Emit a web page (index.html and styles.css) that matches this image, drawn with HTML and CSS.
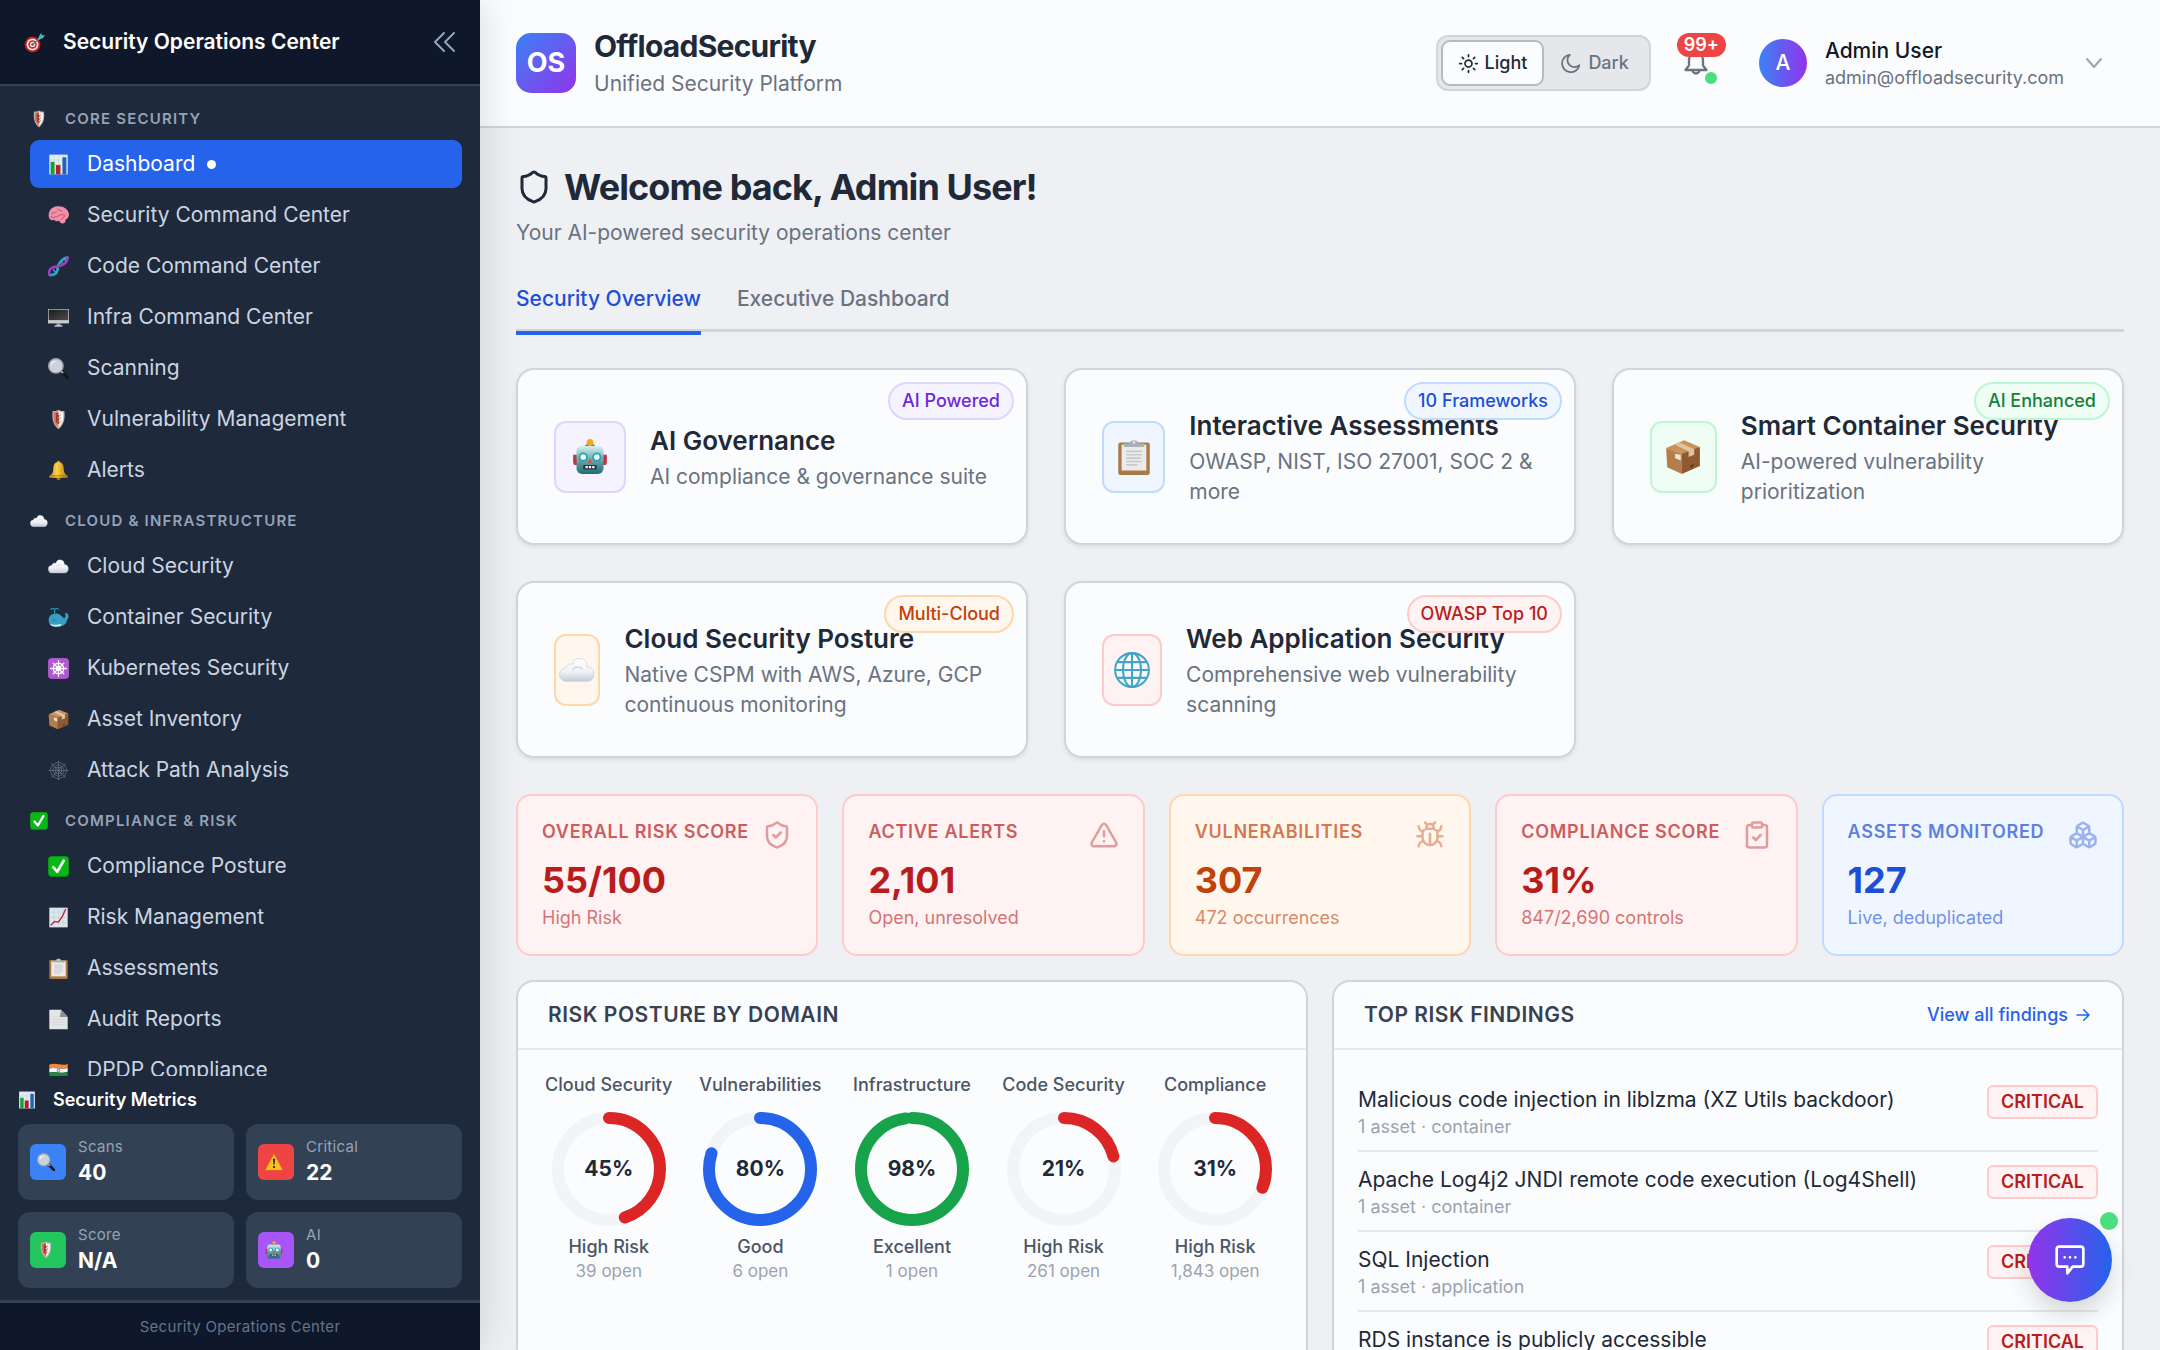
FILE: index.html
```html
<!DOCTYPE html>
<html lang="en">
<head>
    <meta charset="UTF-8">
    <meta name="viewport" content="width=device-width, initial-scale=1.0">
    <title>OffloadSecurity - Unified Security Platform</title>
    <link rel="stylesheet" href="styles.css">
</head>
<body>
    <!-- Shared icon shapes -->
    <svg class="sprite" aria-hidden="true">
        <defs>
            <linearGradient id="gCloud" x1="0" y1="0" x2="0" y2="1"><stop offset="0" stop-color="#ffffff"/><stop offset=".6" stop-color="#eef1f5"/><stop offset="1" stop-color="#c3ccd8"/></linearGradient>
            <linearGradient id="gBot" x1="0" y1="0" x2="0" y2="1"><stop offset="0" stop-color="#d5f2f0"/><stop offset=".5" stop-color="#6fa5a8"/><stop offset="1" stop-color="#1d6f78"/></linearGradient>
            <linearGradient id="gGold" x1="0" y1="0" x2="1" y2="0"><stop offset="0" stop-color="#c98a0a"/><stop offset=".4" stop-color="#fbd34a"/><stop offset="1" stop-color="#b97a08"/></linearGradient>
            <linearGradient id="gScreen" x1="0" y1="0" x2="1" y2="1"><stop offset="0" stop-color="#1c1c1c"/><stop offset="1" stop-color="#4b4b4b"/></linearGradient>
        </defs>
        <symbol id="e-target" viewBox="0 0 32 32">
            <circle cx="13" cy="19" r="12" fill="#c81e1e"/><circle cx="13" cy="19" r="9" fill="#f5e9e9"/><circle cx="13" cy="19" r="6.500" fill="#d42a2a"/><circle cx="13" cy="19" r="4" fill="#f5e9e9"/><circle cx="13" cy="19" r="2" fill="#c81e1e"/>
            <path d="M13 19 25 9" stroke="#2b8f96" stroke-width="2"/><path d="M21 11 24 4l3-3v4l5 0-3 4-7 3z" fill="#4fb3ba"/>
        </symbol>
        <symbol id="e-shield" viewBox="0 0 32 32">
            <path d="M16 1c3 2 6 2 9 2 1 12 0 20-9 28C7 23 6 15 7 3c3 0 6 0 9-2z" fill="#b9b3ad"/>
            <path d="M16 3c-2 1-5 2-7 2-1 10 0 17 7 23z" fill="#e0705f"/><path d="M16 3c2 1 5 2 7 2 1 10 0 17-7 23z" fill="#f4f1ee"/>
            <path d="M16 7h-3v3h3v2h-3v3h3v2h-3v3h3v3" fill="none" stroke="#9c3b30" stroke-width="2"/><path d="M18 9h1M18 14h1M18 19h1" stroke="#5c5550" stroke-width="2"/>
        </symbol>
        <symbol id="e-chart" viewBox="0 0 32 32">
            <path d="M2 1h28v30H2z" fill="#e3edf5"/><path d="M2 9h28M2 16h28M2 23h28M9 1v30M16 1v30M23 1v30" stroke="#c3d3e0"/>
            <path d="M4 12h6v19H4z" fill="#16a02c"/><path d="M12 17h7v14h-7z" fill="#b3202a"/><path d="M22 5h6v26h-6z" fill="#1e63b5"/>
        </symbol>
        <symbol id="e-brain" viewBox="0 0 32 32">
            <path d="M1 16c0-8 5-13 13-14 9-1 17 4 18 12 0 4-2 7-5 8 0 4-2 6-5 6-2 0-4-1-5-4-3 1-6 1-8-1-5 1-8-2-8-7z" fill="#f08fa6"/>
            <path d="M5 14c3-4 6-1 8-4M9 19c3-3 5 0 8-3s5 1 8-2M15 6c1 3 5 1 7 4M20 22c1-3 5-2 6-6M4 18c2 0 3 1 5 3" fill="none" stroke="#c2506f" stroke-width="1.500" stroke-linecap="round"/>
        </symbol>
        <symbol id="e-dna" viewBox="0 0 32 32">
            <path d="M8 21l6 6M12 17l5 4M15 12l5 4M18 7l6 6M23 3l5 5" stroke="#5fa9d8" stroke-width="2"/>
            <path d="M2 29c13 1 12-7 13-12S21 3 31 2" fill="none" stroke="#2ba7c4" stroke-width="4"/><path d="M1 30c0-13 7-13 13-14S30 13 30 1" fill="none" stroke="#a23cc4" stroke-width="4"/>
        </symbol>
        <symbol id="e-desktop" viewBox="0 0 32 32">
            <path d="M0 3h32v22H0z" fill="#c9ccd0"/><path d="M1 4h30v16H1z" fill="url(#gScreen)"/><path d="M13 25h6v4h-6z" fill="#a5a8ad"/><path d="M10 28h12v2H10z" fill="#d5d7da"/>
        </symbol>
        <symbol id="e-search" viewBox="0 0 32 32">
            <path d="M20 20l10 10" stroke="#14161a" stroke-width="5" stroke-linecap="round"/><path d="M19 19l4 4" stroke="#a0a6ad" stroke-width="3"/>
            <circle cx="12" cy="12" r="11" fill="#cbd3da" stroke="#9ba2a9" stroke-width="2"/><path d="M5 11a7 7 0 0 1 6-6" stroke="#f4f8fb" stroke-width="2" fill="none"/>
        </symbol>
        <symbol id="e-bell" viewBox="0 0 32 32">
            <circle cx="16" cy="28" r="3" fill="#a86c06"/><circle cx="16" cy="3" r="2" fill="#d99e17"/>
            <path d="M16 3c-6 0-8 5-8 11 0 5-2 8-6 10v3h28v-3c-4-2-6-5-6-10 0-6-2-11-8-11z" fill="url(#gGold)"/><path d="M3 24h26" stroke="#8f5b05"/>
        </symbol>
        <symbol id="e-cloud" viewBox="0 0 32 32">
            <path d="M7 26a6 6 0 0 1-1-12c1-3 3-4 6-3 1-4 4-6 7-5 4 0 6 3 6 7 4 0 6 3 6 6 0 4-2 7-6 7z" fill="url(#gCloud)" stroke="#bcc5d0" stroke-width=".5"/>
            <path d="M12 16c2-4 7-3 9-1" fill="none" stroke="#ced5de"/>
        </symbol>
        <symbol id="e-whale" viewBox="0 0 32 32">
            <path d="M1 20c0-7 6-11 12-10 6 0 8 6 12 7 2-1 2-3 1-8 3 0 4 1 5 3 1 3 0 6-2 7 0 7-6 11-14 11S1 27 1 20z" fill="#35a0c0"/>
            <path d="M2 25c5 3 12 2 18 1 1 2-2 4-7 4-6 0-9-2-11-5z" fill="#d6edf2"/><path d="M10 9V4M10 4C8 1 5 2 4 4M10 4c2-3 5-2 6 0" fill="none" stroke="#2b8fae" stroke-width="2"/><circle cx="9" cy="20" r="1" fill="#0f3a4a"/>
        </symbol>
        <symbol id="e-wheel" viewBox="0 0 32 32">
            <rect width="32" height="32" rx="6" fill="#a855c8"/><rect x="1" y="1" width="30" height="30" rx="5" fill="#b057d2"/>
            <g fill="none" stroke="#fff" stroke-width="2"><circle cx="16" cy="16" r="8"/><circle cx="16" cy="16" r="3"/><path d="M16 4v24M4 16h24M8 8l16 16M24 8 8 24" stroke-linecap="round"/></g>
        </symbol>
        <symbol id="e-box" viewBox="0 0 32 32">
            <path d="M1 8 17 1l14 6-14 7z" fill="#c9935e"/><path d="M1 8l14 5v18L2 25z" fill="#b67d4a"/><path d="M15 13 31 7v17l-16 7z" fill="#8f5a31"/>
            <path d="M9 5l4-2 13 6v5l-5 2v-5z" fill="#dfc4a4"/><path d="M9 13l5 1v5l-5-2z" fill="#e9e4de"/><path d="M22 24l4-2-2 4z" fill="#5f3a1c"/>
        </symbol>
        <symbol id="e-web" viewBox="0 0 32 32">
            <g fill="none" stroke="#717b89" stroke-width="1"><path d="M16 1v30M1 16h30M5 5l22 22M27 5 5 27"/><path d="M16 3 7 7 3 16l4 9 9 4 9-4 4-9-4-9z"/><path d="M16 7l-6 3-3 6 3 6 6 3 6-3 3-6-3-6z"/><path d="M16 11l-4 1-1 4 1 4 4 1 4-1 1-4-1-4z"/></g>
        </symbol>
        <symbol id="e-check" viewBox="0 0 32 32">
            <rect width="32" height="32" rx="6" fill="#078a12"/><rect x="1" y="1" width="30" height="29" rx="5" fill="#0cb51a"/><path d="M8 17l6 7L24 7" fill="none" stroke="#fff" stroke-width="4" stroke-linecap="round" stroke-linejoin="round"/>
        </symbol>
        <symbol id="e-trend" viewBox="0 0 32 32">
            <path d="M2 1h28v30H2z" fill="#dde6ed"/><path d="M2 8h28M2 16h28M2 24h28M9 1v30M16 1v30M23 1v30" stroke="#c2cfd9"/><path d="M4 28l6-6 6 1 6-9 5-11" fill="none" stroke="#b81f2b" stroke-width="2"/>
        </symbol>
        <symbol id="e-clipboard" viewBox="0 0 32 32">
            <rect x="2" y="3" width="28" height="29" rx="2" fill="#a97a45"/><path d="M5 5h22v23H5z" fill="#eceaea"/><path d="M9 11h14M9 14h14M9 17h13M9 20h14M9 23h10" stroke="#c9c9cb" stroke-width="1.500"/>
            <path d="M7 4h5c0-4 8-4 8 0h5v3H7z" fill="#aab1b8"/><circle cx="16" cy="3" r="1" fill="#f3f4f6"/>
        </symbol>
        <symbol id="e-page" viewBox="0 0 32 32">
            <path d="M2 1h18l10 11v19H2z" fill="#e4e5e7"/><path d="M20 1l10 11H18z" fill="#8a8d92"/><path d="M6 12h10M6 16h20M6 20h20M6 24h20" stroke="#cdced1"/>
        </symbol>
        <symbol id="e-flag" viewBox="0 0 32 32">
            <path d="M2 7c10-4 18 3 28-1v6c-10 4-18-2-28 1z" fill="#f08a3c"/><path d="M2 13c10-3 18 3 28-1v6c-10 4-18-2-28 1z" fill="#f6f6f6"/><path d="M2 19c10-3 18 3 28-1v7c-10 4-18-2-28 2z" fill="#1e8b3d"/><circle cx="16" cy="16" r="2" fill="none" stroke="#3b4fa0"/>
        </symbol>
        <symbol id="e-warning" viewBox="0 0 32 32">
            <path d="M16 2 31 30H1z" fill="#fbc11f" stroke="#f0a80c" stroke-linejoin="round"/><path d="M14 10h4l-1 11h-2z" fill="#33260a"/><circle cx="16" cy="25" r="2" fill="#33260a"/>
        </symbol>
        <symbol id="e-robot" viewBox="0 0 32 32">
            <path d="M1 14h4v9H2l-1-2zM31 14h-4v9h3l1-2z" fill="#b83a46"/><path d="M12 7h8v-2h-8z" fill="#4b3a5c"/><circle cx="16" cy="3" r="3" fill="#f2a81d"/>
            <rect x="4" y="6" width="24" height="25" rx="5" fill="url(#gBot)"/><circle cx="10" cy="16" r="4" fill="#1fa3bd"/><circle cx="22" cy="16" r="4" fill="#1fa3bd"/><circle cx="10" cy="16" r="2.500" fill="#f2ffff"/><circle cx="22" cy="16" r="2.500" fill="#f2ffff"/>
            <path d="M16 17l2 4h-4z" fill="#d8504c"/><rect x="10" y="23" width="12" height="4" rx="1" fill="#23363b"/><path d="M12 25h2M15 25h2M18 25h2" stroke="#fff" stroke-width="2"/>
        </symbol>
        <symbol id="e-globe" viewBox="0 0 32 32">
            <circle cx="16" cy="16" r="14" fill="#f4fbff"/><g fill="none" stroke="#45a3c8" stroke-width="1.800"><circle cx="16" cy="16" r="15"/><path d="M16 1v30M1 16h30M3 9h26M3 23h26"/><ellipse cx="16" cy="16" rx="8" ry="15"/></g>
        </symbol>
    </svg>

    <aside class="sidebar">
        <div class="sidebar-header">
            <svg class="emoji"><use href="#e-target"/></svg>
            <span class="sidebar-title">Security Operations Center</span>
            <button class="collapse" aria-label="Collapse sidebar">
                <svg class="line-icon" viewBox="0 0 24 24"><path d="M12 3 3 12l9 9M22 3l-9 9 9 9"/></svg>
            </button>
        </div>

        <nav class="sidebar-nav">
            <section class="nav-section">
                <h2 class="nav-heading"><svg class="emoji-sm"><use href="#e-shield"/></svg>Core Security</h2>
                <a href="#dashboard" class="nav-item active"><svg class="emoji"><use href="#e-chart"/></svg>Dashboard<span class="nav-dot"></span></a>
                <a href="#security" class="nav-item"><svg class="emoji"><use href="#e-brain"/></svg>Security Command Center</a>
                <a href="#code" class="nav-item"><svg class="emoji"><use href="#e-dna"/></svg>Code Command Center</a>
                <a href="#infra" class="nav-item"><svg class="emoji"><use href="#e-desktop"/></svg>Infra Command Center</a>
                <a href="#scanning" class="nav-item"><svg class="emoji"><use href="#e-search"/></svg>Scanning</a>
                <a href="#vulnerabilities" class="nav-item"><svg class="emoji"><use href="#e-shield"/></svg>Vulnerability Management</a>
                <a href="#alerts" class="nav-item"><svg class="emoji"><use href="#e-bell"/></svg>Alerts</a>
            </section>
            <section class="nav-section">
                <h2 class="nav-heading"><svg class="emoji-sm"><use href="#e-cloud"/></svg>Cloud &amp; Infrastructure</h2>
                <a href="#cloud" class="nav-item"><svg class="emoji"><use href="#e-cloud"/></svg>Cloud Security</a>
                <a href="#container" class="nav-item"><svg class="emoji"><use href="#e-whale"/></svg>Container Security</a>
                <a href="#kubernetes" class="nav-item"><svg class="emoji"><use href="#e-wheel"/></svg>Kubernetes Security</a>
                <a href="#assets" class="nav-item"><svg class="emoji"><use href="#e-box"/></svg>Asset Inventory</a>
                <a href="#attack-path" class="nav-item"><svg class="emoji"><use href="#e-web"/></svg>Attack Path Analysis</a>
            </section>
            <section class="nav-section">
                <h2 class="nav-heading"><svg class="emoji-sm"><use href="#e-check"/></svg>Compliance &amp; Risk</h2>
                <a href="#compliance" class="nav-item"><svg class="emoji"><use href="#e-check"/></svg>Compliance Posture</a>
                <a href="#risk" class="nav-item"><svg class="emoji"><use href="#e-trend"/></svg>Risk Management</a>
                <a href="#assessments" class="nav-item"><svg class="emoji"><use href="#e-clipboard"/></svg>Assessments</a>
                <a href="#audit" class="nav-item"><svg class="emoji"><use href="#e-page"/></svg>Audit Reports</a>
                <a href="#dpdp" class="nav-item"><svg class="emoji"><use href="#e-flag"/></svg>DPDP Compliance</a>
            </section>
        </nav>

        <div class="metrics">
            <h2 class="metrics-title"><svg class="emoji-sm"><use href="#e-chart"/></svg>Security Metrics</h2>
            <div class="metrics-grid">
                <div class="metric">
                    <span class="metric-icon blue"><svg class="emoji-sm"><use href="#e-search"/></svg></span>
                    <div><div class="metric-label">Scans</div><div class="metric-value">40</div></div>
                </div>
                <div class="metric">
                    <span class="metric-icon red"><svg class="emoji-sm"><use href="#e-warning"/></svg></span>
                    <div><div class="metric-label">Critical</div><div class="metric-value">22</div></div>
                </div>
                <div class="metric">
                    <span class="metric-icon green"><svg class="emoji-sm"><use href="#e-shield"/></svg></span>
                    <div><div class="metric-label">Score</div><div class="metric-value">N/A</div></div>
                </div>
                <div class="metric">
                    <span class="metric-icon purple"><svg class="emoji-sm"><use href="#e-robot"/></svg></span>
                    <div><div class="metric-label">AI</div><div class="metric-value">0</div></div>
                </div>
            </div>
        </div>
        <footer class="sidebar-footer">Security Operations Center</footer>
    </aside>

    <div class="page">
        <header class="topbar">
            <div class="logo">OS</div>
            <div class="brand">
                <div class="brand-name">OffloadSecurity</div>
                <div class="brand-sub">Unified Security Platform</div>
            </div>
            <div class="theme-toggle">
                <button class="theme-btn selected">
                    <svg class="line-icon" viewBox="0 0 24 24"><circle cx="12" cy="12" r="4"/><path d="M12 2v2M12 20v2M4.930 4.930l1.410 1.410M17.660 17.660l1.410 1.410M2 12h2M20 12h2M6.340 17.660l-1.410 1.410M19.070 4.930l-1.410 1.410"/></svg>Light
                </button>
                <button class="theme-btn">
                    <svg class="line-icon" viewBox="0 0 24 24"><path d="M10 2a7 7 0 0 0 11 12A10 10 0 1 1 10 2z"/></svg>Dark
                </button>
            </div>
            <button class="bell" aria-label="Notifications">
                <svg class="line-icon" viewBox="0 0 24 24"><path d="M6 9a6 6 0 0 1 12 0v5l3 4H3l3-4zM9 18a3 3 0 0 0 6 0"/></svg>
                <span class="bell-count">99+</span>
                <span class="bell-dot"></span>
            </button>
            <button class="user">
                <span class="avatar">A</span>
                <span class="user-text">
                    <span class="user-name">Admin User</span>
                    <span class="user-mail">admin@offloadsecurity.com</span>
                </span>
                <svg class="line-icon" viewBox="0 0 24 24"><path d="M5 8l7 8 7-8"/></svg>
            </button>
        </header>

        <main class="content">
            <h1 class="welcome">
                <svg class="line-icon" viewBox="0 0 24 24"><path d="M20 13c0 5-3.500 7.500-7.660 8.950a1 1 0 0 1-.670-.010C7.500 20.500 4 18 4 13V6a1 1 0 0 1 1-1c2 0 4.500-1.200 6.240-2.720a1.170 1.170 0 0 1 1.520 0C14.510 3.810 17 5 19 5a1 1 0 0 1 1 1z"/></svg>
                Welcome back, Admin User!
            </h1>
            <p class="welcome-sub">Your AI-powered security operations center</p>

            <div class="tabs">
                <a href="#overview" class="tab active">Security Overview</a>
                <a href="#executive" class="tab">Executive Dashboard</a>
            </div>

            <div class="features">
                <article class="feature">
                    <span class="tag purple">AI Powered</span>
                    <div class="feature-icon purple"><svg><use href="#e-robot"/></svg></div>
                    <div><h3>AI Governance</h3><p>AI compliance &amp; governance suite</p></div>
                </article>
                <article class="feature">
                    <span class="tag blue">10 Frameworks</span>
                    <div class="feature-icon blue"><svg><use href="#e-clipboard"/></svg></div>
                    <div><h3>Interactive Assessments</h3><p>OWASP, NIST, ISO 27001, SOC 2 &amp; more</p></div>
                </article>
                <article class="feature">
                    <span class="tag green">AI Enhanced</span>
                    <div class="feature-icon green"><svg><use href="#e-box"/></svg></div>
                    <div><h3>Smart Container Security</h3><p>AI-powered vulnerability prioritization</p></div>
                </article>
                <article class="feature">
                    <span class="tag orange">Multi-Cloud</span>
                    <div class="feature-icon orange"><svg><use href="#e-cloud"/></svg></div>
                    <div><h3>Cloud Security Posture</h3><p>Native CSPM with AWS, Azure, GCP continuous monitoring</p></div>
                </article>
                <article class="feature">
                    <span class="tag red">OWASP Top 10</span>
                    <div class="feature-icon red"><svg><use href="#e-globe"/></svg></div>
                    <div><h3>Web Application Security</h3><p>Comprehensive web vulnerability scanning</p></div>
                </article>
            </div>

            <div class="stats">
                <div class="stat red">
                    <div class="stat-top"><span class="stat-label">Overall Risk Score</span>
                        <svg class="line-icon" viewBox="0 0 24 24"><path d="M20 13c0 5-3.500 7.500-7.660 8.950a1 1 0 0 1-.670-.010C7.500 20.500 4 18 4 13V6a1 1 0 0 1 1-1c2 0 4.500-1.200 6.240-2.720a1.170 1.170 0 0 1 1.520 0C14.510 3.810 17 5 19 5a1 1 0 0 1 1 1z"/><path d="m9 12 2 2 4-4"/></svg></div>
                    <div class="stat-value">55/100</div>
                    <div class="stat-note">High Risk</div>
                </div>
                <div class="stat red">
                    <div class="stat-top"><span class="stat-label">Active Alerts</span>
                        <svg class="line-icon" viewBox="0 0 24 24"><path d="m21.730 18-8-14a2 2 0 0 0-3.480 0l-8 14A2 2 0 0 0 4 21h16a2 2 0 0 0 1.730-3"/><path d="M12 9v4M12 17h.010"/></svg></div>
                    <div class="stat-value">2,101</div>
                    <div class="stat-note">Open, unresolved</div>
                </div>
                <div class="stat orange">
                    <div class="stat-top"><span class="stat-label">Vulnerabilities</span>
                        <svg class="line-icon" viewBox="0 0 24 24"><path d="m8 2 1.880 1.880M14.120 3.880 16 2M9 7.130v-1a3 3 0 1 1 6 0v1M12 20c-3.300 0-6-2.700-6-6v-3a4 4 0 0 1 4-4h4a4 4 0 0 1 4 4v3c0 3.300-2.700 6-6 6M12 20v-9M6.530 9C4.600 8.800 3 7.100 3 5M6 13H2M3 21c0-2.100 1.700-3.900 3.800-4M20.970 5c0 2.100-1.600 3.800-3.500 4M22 13h-4M17.200 17c2.100.1 3.800 1.900 3.800 4"/></svg></div>
                    <div class="stat-value">307</div>
                    <div class="stat-note">472 occurrences</div>
                </div>
                <div class="stat red">
                    <div class="stat-top"><span class="stat-label">Compliance Score</span>
                        <svg class="line-icon" viewBox="0 0 24 24"><rect x="8" y="2" width="8" height="4" rx="1"/><path d="M16 4h2a2 2 0 0 1 2 2v14a2 2 0 0 1-2 2H6a2 2 0 0 1-2-2V6a2 2 0 0 1 2-2h2M9 14l2 2 4-4"/></svg></div>
                    <div class="stat-value">31%</div>
                    <div class="stat-note">847/2,690 controls</div>
                </div>
                <div class="stat blue">
                    <div class="stat-top"><span class="stat-label">Assets Monitored</span>
                        <svg class="line-icon" viewBox="0 0 24 24"><path d="M2.970 12.920A2 2 0 0 0 2 14.630v3.240a2 2 0 0 0 .970 1.710l3 1.800a2 2 0 0 0 2.060 0L12 19v-5.500l-5-3-4.030 2.420ZM7 16.500l-4.740-2.850M7 16.500l5-3M7 16.500v5.170M12 13.500V19l3.970 2.380a2 2 0 0 0 2.060 0l3-1.800a2 2 0 0 0 .970-1.710v-3.240a2 2 0 0 0-.970-1.710L17 10.500l-5 3ZM17 16.500l-5-3M17 16.500l4.740-2.850M17 16.500v5.170M7.970 4.420A2 2 0 0 0 7 6.130v4.370l5 3 5-3V6.130a2 2 0 0 0-.970-1.710l-3-1.800a2 2 0 0 0-2.060 0l-3 1.800ZM12 8 7.260 5.150M12 8l4.740-2.850M12 13.500V8"/></svg></div>
                    <div class="stat-value">127</div>
                    <div class="stat-note">Live, deduplicated</div>
                </div>
            </div>

            <div class="panels">
                <section class="panel">
                    <div class="panel-header"><h2>Risk Posture by Domain</h2></div>
                    <div class="gauges">
                        <div class="gauge">
                            <div class="gauge-name">Cloud Security</div>
                            <div class="ring"><svg viewBox="0 0 114 114"><circle class="track" cx="57" cy="57" r="51"/><circle class="arc red" cx="57" cy="57" r="51" pathLength="100" stroke-dasharray="45 100"/></svg><span>45%</span></div>
                            <div class="gauge-state">High Risk</div><div class="gauge-open">39 open</div>
                        </div>
                        <div class="gauge">
                            <div class="gauge-name">Vulnerabilities</div>
                            <div class="ring"><svg viewBox="0 0 114 114"><circle class="track" cx="57" cy="57" r="51"/><circle class="arc blue" cx="57" cy="57" r="51" pathLength="100" stroke-dasharray="80 100"/></svg><span>80%</span></div>
                            <div class="gauge-state">Good</div><div class="gauge-open">6 open</div>
                        </div>
                        <div class="gauge">
                            <div class="gauge-name">Infrastructure</div>
                            <div class="ring"><svg viewBox="0 0 114 114"><circle class="track" cx="57" cy="57" r="51"/><circle class="arc green" cx="57" cy="57" r="51" pathLength="100" stroke-dasharray="98 100"/></svg><span>98%</span></div>
                            <div class="gauge-state">Excellent</div><div class="gauge-open">1 open</div>
                        </div>
                        <div class="gauge">
                            <div class="gauge-name">Code Security</div>
                            <div class="ring"><svg viewBox="0 0 114 114"><circle class="track" cx="57" cy="57" r="51"/><circle class="arc red" cx="57" cy="57" r="51" pathLength="100" stroke-dasharray="21 100"/></svg><span>21%</span></div>
                            <div class="gauge-state">High Risk</div><div class="gauge-open">261 open</div>
                        </div>
                        <div class="gauge">
                            <div class="gauge-name">Compliance</div>
                            <div class="ring"><svg viewBox="0 0 114 114"><circle class="track" cx="57" cy="57" r="51"/><circle class="arc red" cx="57" cy="57" r="51" pathLength="100" stroke-dasharray="31 100"/></svg><span>31%</span></div>
                            <div class="gauge-state">High Risk</div><div class="gauge-open">1,843 open</div>
                        </div>
                    </div>
                </section>

                <section class="panel">
                    <div class="panel-header">
                        <h2>Top Risk Findings</h2>
                        <a href="#findings" class="view-all">View all findings <svg class="line-icon" viewBox="0 0 24 24"><path d="M4 12h16M13 5l7 7-7 7"/></svg></a>
                    </div>
                    <ul class="findings">
                        <li>
                            <div><div class="finding-title">Malicious code injection in liblzma (XZ Utils backdoor)</div><div class="finding-meta">1 asset · container</div></div>
                            <span class="severity">CRITICAL</span>
                        </li>
                        <li>
                            <div><div class="finding-title">Apache Log4j2 JNDI remote code execution (Log4Shell)</div><div class="finding-meta">1 asset · container</div></div>
                            <span class="severity">CRITICAL</span>
                        </li>
                        <li>
                            <div><div class="finding-title">SQL Injection</div><div class="finding-meta">1 asset · application</div></div>
                            <span class="severity">CRITICAL</span>
                        </li>
                        <li>
                            <div><div class="finding-title">RDS instance is publicly accessible</div></div>
                            <span class="severity">CRITICAL</span>
                        </li>
                    </ul>
                </section>
            </div>
        </main>
    </div>

    <button class="chat" aria-label="Open AI assistant">
        <svg class="line-icon" viewBox="0 0 24 24"><path d="M4 2h16a2 2 0 0 1 2 2v11a2 2 0 0 1-2 2h-6l-4 5v-5H4a2 2 0 0 1-2-2V4a2 2 0 0 1 2-2zM8 10h.010M12 10h.010M16 10h.010"/></svg>
        <span class="chat-dot"></span>
    </button>
</body>
</html>
```

FILE: styles.css
```css
* {
    box-sizing: border-box;
}
body {
    margin: 0;
    display: flex;
    height: 100vh;
    overflow: hidden;
    font-family: Inter, "Noto Sans", sans-serif;
    font-size: 21px;
    line-height: 30px;
    color: #1f2937;
    background-color: #eef0f4;
}
h1, h2, h3, p, ul {
    margin: 0;
    padding: 0;
}
button {
    font: inherit;
    border: none;
    background: none;
    padding: 0;
    cursor: pointer;
}
a {
    text-decoration: none;
}
svg {
    display: block;
    flex-shrink: 0;
}
.sprite {
    position: absolute;
    width: 0;
    height: 0;
}
.line-icon {
    width: 24px;
    height: 24px;
    fill: none;
    stroke: currentColor;
    stroke-width: 2;
    stroke-linecap: round;
    stroke-linejoin: round;
}
.emoji {
    width: 21px;
    height: 21px;
}
.emoji-sm {
    width: 18px;
    height: 18px;
}

/* Sidebar */
.sidebar {
    position: relative;
    z-index: 2;
    flex: 0 0 480px;
    display: flex;
    flex-direction: column;
    background-color: #1e293b;
    box-shadow: 0 0 40px rgba(0, 0, 0, 0.15);
}
.sidebar-header {
    display: flex;
    align-items: center;
    gap: 18px;
    padding: 27px 24px;
    background-color: #0f172a;
    border-bottom: 2px solid #334155;
}
.sidebar-title {
    flex: 1;
    font-weight: 600;
    color: #fff;
}
.collapse {
    color: #94a3b8;
}
.sidebar-nav {
    flex: 1;
    min-height: 0;
    overflow-y: auto;
    scrollbar-width: none;
    padding: 21px 18px 0 30px;
}
.nav-section {
    display: flex;
    flex-direction: column;
    gap: 3px;
    margin-bottom: 15px;
}
.nav-heading {
    display: flex;
    align-items: center;
    gap: 17px;
    margin-bottom: 6px;
    font-size: 15px;
    line-height: 24px;
    font-weight: 600;
    letter-spacing: 0.08em;
    text-transform: uppercase;
    color: #94a3b8;
}
.nav-item {
    display: flex;
    align-items: center;
    gap: 18px;
    padding: 9px 18px;
    border-radius: 9px;
    color: #cbd5e1;
}
.nav-item:hover {
    background-color: #334155;
}
.nav-item.active {
    background-color: #2563eb;
    color: #fff;
}
.nav-dot {
    width: 9px;
    height: 9px;
    margin-left: -6px;
    border-radius: 50%;
    background-color: #fff;
}
.metrics {
    padding: 12px 18px;
}
.metrics-title {
    display: flex;
    align-items: center;
    gap: 17px;
    margin-bottom: 12px;
    font-size: 18px;
    line-height: 24px;
    font-weight: 600;
    color: #fff;
}
.metrics-grid {
    display: grid;
    grid-template-columns: 1fr 1fr;
    gap: 12px;
}
.metric {
    display: flex;
    align-items: center;
    gap: 12px;
    padding: 12px;
    border-radius: 12px;
    background-color: #334155;
}
.metric-icon {
    display: flex;
    align-items: center;
    justify-content: center;
    width: 36px;
    height: 36px;
    padding-right: 4px;
    border-radius: 6px;
}
.metric-icon.blue { background-color: #3b82f6; }
.metric-icon.red { background-color: #ef4444; }
.metric-icon.green { background-color: #22c55e; }
.metric-icon.purple { background-color: #a855f7; }
.metric-label {
    font-size: 15px;
    line-height: 22px;
    letter-spacing: 0.02em;
    color: #94a3b8;
}
.metric-value {
    font-weight: 700;
    color: #fff;
}
.sidebar-footer {
    padding: 12px;
    border-top: 3px solid #334155;
    background-color: #0f172a;
    font-size: 15px;
    line-height: 23px;
    letter-spacing: 0.02em;
    text-align: center;
    color: #64748b;
}

/* Top bar */
.page {
    flex: 1;
    min-width: 0;
    display: flex;
    flex-direction: column;
}
.topbar {
    display: flex;
    align-items: center;
    gap: 24px;
    padding: 27px 36px;
    background-color: #fafcfe;
    border-bottom: 2px solid #d1d5db;
}
.logo {
    display: flex;
    align-items: center;
    justify-content: center;
    width: 60px;
    height: 60px;
    border-radius: 15px;
    background: linear-gradient(135deg, #3b82f6, #9333ea);
    font-size: 27px;
    font-weight: 700;
    color: #fff;
}
.brand {
    flex: 1;
    margin-left: -6px;
}
.brand-name {
    font-size: 30px;
    line-height: 38px;
    font-weight: 700;
    letter-spacing: -0.025em;
}
.brand-sub {
    margin-top: 4px;
    color: #6b7280;
}
.theme-toggle {
    display: flex;
    padding: 3px;
    border: 2px solid #d1d5db;
    border-radius: 12px;
    background-color: #e5e7eb;
}
.theme-btn {
    display: flex;
    align-items: center;
    gap: 6px;
    padding: 6px 15px;
    border: 2px solid transparent;
    border-radius: 9px;
    font-size: 18px;
    font-weight: 500;
    color: #6b7280;
}
.theme-btn .line-icon {
    width: 21px;
    height: 21px;
}
.theme-btn.selected {
    border-color: #b6bac2;
    background-color: #fafcfe;
    color: #1f2937;
}
.bell {
    position: relative;
    padding: 7px;
    color: #6b7280;
}
.bell .line-icon {
    width: 28px;
    height: 28px;
}
.bell-count {
    position: absolute;
    top: -9px;
    right: -9px;
    padding: 0 7px;
    border-radius: 12px;
    background-color: #ef4444;
    font-size: 18px;
    line-height: 24px;
    font-weight: 600;
    color: #fff;
}
.bell-dot {
    position: absolute;
    right: 0;
    bottom: 0;
    width: 12px;
    height: 12px;
    border-radius: 50%;
    background-color: #4ade80;
}
.user {
    display: flex;
    align-items: center;
    gap: 18px;
    padding: 0 18px;
    text-align: left;
    color: #9ca3af;
}
.avatar {
    display: flex;
    align-items: center;
    justify-content: center;
    width: 48px;
    height: 48px;
    border-radius: 50%;
    background: linear-gradient(90deg, #3b82f6, #9333ea);
    font-weight: 500;
    color: #fff;
}
.user-name {
    display: block;
    font-weight: 500;
    color: #111827;
}
.user-mail {
    display: block;
    font-size: 18px;
    line-height: 24px;
    color: #6b7280;
}

/* Content */
.content {
    flex: 1;
    min-height: 0;
    overflow-y: auto;
    scrollbar-width: none;
    padding: 36px;
}
.welcome {
    display: flex;
    align-items: center;
    gap: 12px;
    font-size: 36px;
    line-height: 46px;
    font-weight: 700;
    letter-spacing: -0.025em;
}
.welcome .line-icon {
    width: 36px;
    height: 36px;
}
.welcome-sub {
    margin-top: 8px;
    color: #6b7280;
}
.tabs {
    display: flex;
    gap: 36px;
    margin: 18px 0 36px;
    border-bottom: 3px solid #d1d5db;
}
.tab {
    margin-bottom: -6px;
    padding: 18px 0 17px;
    border-bottom: 4px solid transparent;
    font-weight: 500;
    color: #6b7280;
}
.tab.active {
    border-color: #2563eb;
    color: #1d4ed8;
}

.features {
    display: grid;
    grid-template-columns: repeat(3, 1fr);
    gap: 36px;
}
.feature {
    position: relative;
    display: flex;
    align-items: center;
    gap: 24px;
    padding: 36px;
    border: 2px solid #d1d5db;
    border-radius: 18px;
    background-color: #fafcfe;
    box-shadow: 0 2px 4px rgba(0, 0, 0, 0.08);
}
.feature h3 {
    padding-top: 2px;
    font-size: 26px;
    line-height: 36px;
    font-weight: 600;
}
.feature p {
    margin-top: 3px;
    color: #6b7280;
}
.feature-icon {
    display: flex;
    align-items: center;
    justify-content: center;
    width: 72px;
    height: 72px;
    border: 2px solid;
    border-radius: 12px;
}
.feature-icon svg {
    width: 36px;
    height: 36px;
}
.tag {
    position: absolute;
    top: 12px;
    right: 12px;
    padding: 5px 12px;
    border: 2px solid;
    border-radius: 20px;
    font-size: 18px;
    line-height: 24px;
    font-weight: 500;
}
.feature-icon.purple, .tag.purple { background-color: #f5f3ff; border-color: #ddd6fe; color: #6d28d9; }
.feature-icon.blue, .tag.blue { background-color: #eff6ff; border-color: #bfdbfe; color: #1d4ed8; }
.feature-icon.green, .tag.green { background-color: #f0fdf4; border-color: #bbf7d0; color: #15803d; }
.feature-icon.orange, .tag.orange { background-color: #fff7ed; border-color: #fed7aa; color: #c2410c; }
.feature-icon.red, .tag.red { background-color: #fef2f2; border-color: #fecaca; color: #b91c1c; }

.stats {
    display: grid;
    grid-template-columns: repeat(5, 1fr);
    gap: 24px;
    margin: 36px 0 24px;
}
.stat {
    padding: 24px;
    border: 2px solid;
    border-radius: 15px;
}
.stat.red { background-color: #fef2f2; border-color: #fecaca; color: #b91c1c; }
.stat.orange { background-color: #fff7ed; border-color: #fed7aa; color: #c2410c; }
.stat.blue { background-color: #eff6ff; border-color: #bfdbfe; color: #1d4ed8; }
.stat-top {
    display: flex;
    justify-content: space-between;
}
.stat-top .line-icon {
    width: 30px;
    height: 30px;
    opacity: 0.4;
}
.stat-label {
    font-size: 18px;
    line-height: 24px;
    font-weight: 600;
    letter-spacing: 0.04em;
    text-transform: uppercase;
    opacity: 0.7;
}
.stat-value {
    margin: 8px 0 4px;
    font-size: 36px;
    line-height: 44px;
    font-weight: 700;
}
.stat-note {
    font-size: 18px;
    line-height: 24px;
    opacity: 0.6;
}

.panels {
    display: grid;
    grid-template-columns: 1fr 1fr;
    gap: 24px;
}
.panel {
    border: 2px solid #d1d5db;
    border-radius: 18px;
    background-color: #fafcfe;
}
.panel-header {
    display: flex;
    align-items: center;
    justify-content: space-between;
    padding: 18px 30px;
    border-bottom: 2px solid #e5e7eb;
}
.panel-header h2 {
    font-size: 21px;
    font-weight: 600;
    letter-spacing: 0.025em;
    text-transform: uppercase;
    color: #374151;
}
.view-all {
    display: flex;
    align-items: center;
    gap: 6px;
    font-size: 18px;
    font-weight: 500;
    color: #2563eb;
}
.view-all .line-icon {
    width: 18px;
    height: 18px;
}
.gauges {
    display: grid;
    grid-template-columns: repeat(5, 1fr);
    padding: 23px 15px;
    text-align: center;
    font-size: 18px;
    line-height: 24px;
}
.gauge-name, .gauge-state {
    font-weight: 500;
    color: #4b5563;
}
.ring {
    display: grid;
    place-items: center;
    margin: 15px 0 9px;
}
.ring svg, .ring span {
    grid-area: 1 / 1;
}
.ring svg {
    width: 114px;
    height: 114px;
    transform: rotate(-90deg);
    fill: none;
    stroke-width: 12;
}
.ring span {
    font-size: 21px;
    font-weight: 700;
}
.track { stroke: #f3f4f6; }
.arc { stroke-linecap: round; }
.arc.red { stroke: #dc2626; }
.arc.blue { stroke: #2563eb; }
.arc.green { stroke: #16a34a; }
.gauge-open {
    font-size: 17px;
    color: #9ca3af;
}
.findings {
    padding: 22px 24px;
    list-style: none;
}
.findings li {
    display: flex;
    align-items: flex-start;
    justify-content: space-between;
    padding: 13px 0 11px;
    border-bottom: 2px solid #e5e7eb;
}
.finding-meta {
    font-size: 18px;
    line-height: 24px;
    color: #9ca3af;
}
.severity {
    padding: 3px 12px;
    border: 2px solid #fecaca;
    border-radius: 6px;
    background-color: #fef2f2;
    font-size: 18px;
    line-height: 24px;
    font-weight: 600;
    color: #b91c1c;
}

/* Floating chat button */
.chat {
    position: fixed;
    right: 48px;
    bottom: 48px;
    z-index: 3;
    display: flex;
    align-items: center;
    justify-content: center;
    width: 84px;
    height: 84px;
    border-radius: 50%;
    background: linear-gradient(90deg, #9333ea, #2563eb);
    box-shadow: 0 12px 24px rgba(0, 0, 0, 0.15);
    color: #fff;
}
.chat .line-icon {
    width: 32px;
    height: 32px;
}
.chat-dot {
    position: absolute;
    top: -6px;
    right: -6px;
    width: 18px;
    height: 18px;
    border-radius: 50%;
    background-color: #4ade80;
}
```
